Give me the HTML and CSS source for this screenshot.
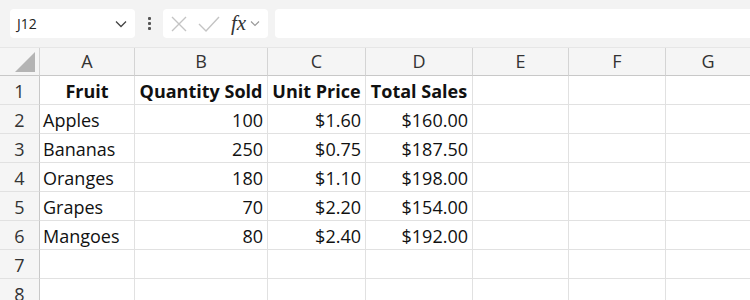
FILE: index.html
```html
<!DOCTYPE html>
<html lang="en">
	<head>
		<meta charset="UTF-8" />
		<title>Fruit sales</title>
		<link rel="stylesheet" href="styles.css">
	</head>
	<body>
		<!-- name box + formula bar -->
		<div class="toolbar">
			<div class="name-box">
				<span>J12</span>
				<svg width="12" height="8" viewBox="0 0 12 8"><path d="M1 1.5 L6 6.5 L11 1.5" fill="none" stroke="#444" stroke-width="1.3"/></svg>
			</div>
			<div class="grip"><i></i><i></i><i></i></div>
			<div class="fx-box">
				<svg width="18" height="18" viewBox="0 0 18 18"><path d="M2 2 L16 16 M16 2 L2 16" stroke="#c4c4c4" stroke-width="1.4"/></svg>
				<svg width="22" height="18" viewBox="0 0 22 18"><path d="M1 9 L8 16 L21 2" fill="none" stroke="#c4c4c4" stroke-width="1.4"/></svg>
				<span class="fx">fx</span>
				<svg width="10" height="7" viewBox="0 0 10 7"><path d="M1 1.5 L5 5.5 L9 1.5" fill="none" stroke="#999" stroke-width="1.1"/></svg>
			</div>
			<div class="formula-input"></div>
		</div>

		<div class="sheet">
			<div class="corner"><div class="tri"></div></div>
			<div class="col-head">A</div>
			<div class="col-head">B</div>
			<div class="col-head">C</div>
			<div class="col-head">D</div>
			<div class="col-head">E</div>
			<div class="col-head">F</div>
			<div class="col-head">G</div>
		</div>
		<div class="sheet" id="Rows"></div>

		<script>
			const rows = [
				["Fruit", "Quantity Sold", "Unit Price", "Total Sales"],
				["Apples", "100", "$1.60", "$160.00"],
				["Bananas", "250", "$0.75", "$187.50"],
				["Oranges", "180", "$1.10", "$198.00"],
				["Grapes", "70", "$2.20", "$154.00"],
				["Mangoes", "80", "$2.40", "$192.00"],
				[],
				[],
			];
			const grid = document.getElementById("Rows");
			rows.forEach((row, i) => {
				const head = document.createElement("div");
				head.className = "row-head";
				head.textContent = i + 1;
				grid.appendChild(head);
				for (let c = 0; c < 7; c++) {
					const cell = document.createElement("div");
					cell.className = "cell";
					const val = row[c] || "";
					if (i === 0 && val) cell.classList.add("bold");
					else if (c > 0 && val) cell.classList.add("num");
					cell.textContent = val;
					grid.appendChild(cell);
				}
			});
		</script>
	</body>
</html>
```

FILE: styles.css
```css
* {
	box-sizing: border-box;
}
body {
	margin: 0;
	font-family: "Open Sans", "Noto Sans", sans-serif;
	background: #fff;
	overflow: hidden;
}
.toolbar {
	height: 48px;
	background: #f3f3f3;
	display: flex;
	align-items: center;
	padding: 0 0 0 10px;
	border-bottom: 1px solid #e6e6e6;
}
.name-box {
	width: 125px;
	height: 29px;
	background: #fff;
	border-radius: 4px;
	display: flex;
	align-items: center;
	justify-content: space-between;
	padding: 0 8px 0 7px;
	font-size: 14px;
	color: #222;
}
.grip {
	width: 28px;
	display: flex;
	flex-direction: column;
	align-items: center;
	gap: 2px;
}
.grip i {
	width: 3px;
	height: 3px;
	background: #555;
	border-radius: 1px;
}
.fx-box {
	width: 105px;
	height: 29px;
	background: #fff;
	border-radius: 4px;
	display: flex;
	align-items: center;
	padding: 0 0 0 7px;
	gap: 10px;
}
.fx-box .fx {
	font-family: "Liberation Serif", serif;
	font-style: italic;
	font-size: 21px;
	color: #333;
	margin-left: 1px;
	margin-right: -6px;
	line-height: 1;
}
.formula-input {
	flex: 1;
	height: 29px;
	margin-left: 7px;
	background: #fff;
	border-radius: 4px 0 0 4px;
}
.sheet {
	display: grid;
	grid-template-columns: 40px 95px 133px 98px 107px 96px 97px 84px;
}
#Rows {
	grid-auto-rows: 29px;
}
.corner,
.col-head {
	height: 28px;
	background: #f5f5f5;
	border-right: 1px solid #d4d4d4;
	border-bottom: 1px solid #c8c8c8;
}
.corner {
	position: relative;
}
.tri {
	position: absolute;
	right: 4px;
	bottom: 3px;
	width: 20px;
	height: 20px;
	background: #b4b4b4;
	clip-path: polygon(100% 0, 100% 100%, 0 100%);
}
.col-head {
	display: flex;
	align-items: flex-end;
	justify-content: center;
	padding-bottom: 2px;
	font-size: 18px;
	color: #333;
}
.col-head:last-child {
	border-right: none;
}
.row-head {
	background: #f5f5f5;
	border-right: 1px solid #c8c8c8;
	border-bottom: 1px solid #e1e1e1;
	display: flex;
	align-items: flex-end;
	justify-content: center;
	padding-bottom: 1px;
	font-size: 18px;
	color: #333;
}
.cell {
	border-right: 1px solid #e1e1e1;
	border-bottom: 1px solid #e1e1e1;
	display: flex;
	align-items: flex-end;
	padding: 0 4px 1px 3px;
	font-size: 18px;
	color: #111;
	white-space: nowrap;
}
.cell:nth-child(8n) {
	border-right: none;
}
.bold {
	font-weight: 700;
	justify-content: center;
	padding: 0 2px 1px 2px;
}
.num {
	justify-content: flex-end;
}
```
